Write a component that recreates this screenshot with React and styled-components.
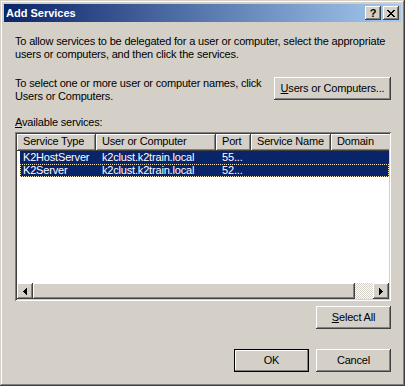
import React from "react";
import styled, { createGlobalStyle, css } from "styled-components";

const Global = createGlobalStyle`
  html, body { margin: 0; padding: 0; background: #d4d0c8; }
  body {
    width: 405px; height: 386px; overflow: hidden;
    font-family: "Liberation Sans", Arial, sans-serif;
    font-size: 11px; letter-spacing: -0.18px; color: #000;
  }
`;

const raised = css`
  box-shadow: inset -1px -1px #404040, inset 1px 1px #fff, inset -2px -2px #808080, inset 2px 2px #d4d0c8;
`;

const Window = styled.div`
  box-sizing: border-box;
  width: 405px;
  height: 386px;
  padding: 4px;
  background: #d4d0c8;
  box-shadow: inset -1px -1px #404040, inset 1px 1px #d4d0c8, inset -2px -2px #808080, inset 2px 2px #fff;
  display: flex;
  flex-direction: column;
`;

const TitleBar = styled.div`
  flex: 0 0 18px;
  display: flex;
  align-items: center;
  gap: 2px;
  padding: 0 2px;
  background: linear-gradient(to right, #0a246a, #a6caf0);
`;

const Title = styled.span`
  flex: 1;
  color: #fff;
  font-weight: bold;
  font-size: 11px;
  letter-spacing: 0;
  line-height: 18px;
  white-space: nowrap;
`;

const CaptionButton = styled.div`
  box-sizing: border-box;
  width: 16px;
  height: 14px;
  background: #d4d0c8;
  ${raised};
  display: flex;
  align-items: center;
  justify-content: center;
  font-weight: bold;
  font-size: 11px;
  letter-spacing: 0;
  line-height: 14px;
  svg { display: block; }
`;

const Body = styled.div`
  flex: 1;
  display: flex;
  flex-direction: column;
  padding: 13px 10px 10px 11px;
`;

const Para = styled.p`
  margin: 0;
  line-height: 13px;
  white-space: nowrap;
`;

const TopRow = styled.div`
  display: flex;
  justify-content: space-between;
  align-items: flex-start;
  margin-top: 16px;
`;

const Button = styled.button`
  box-sizing: border-box;
  width: ${(p) => p.$w || 75}px;
  height: 23px;
  margin: 0;
  padding: 0;
  border: none;
  background: #d4d0c8;
  font-family: "Liberation Sans", Arial, sans-serif;
  font-size: 11px;
  letter-spacing: -0.18px;
  color: #000;
  line-height: 13px;
  ${raised};
  ${(p) =>
    p.$default &&
    css`
      box-shadow: inset 0 0 0 1px #000, inset -2px -2px #808080, inset 2px 2px #fff;
    `}
`;

const Label = styled.div`
  margin-top: 13px;
  line-height: 13px;
  white-space: nowrap;
`;

const ListView = styled.div`
  box-sizing: border-box;
  margin-top: 3px;
  height: 169px;
  padding: 2px;
  background: #fff;
  box-shadow: inset 1px 1px #808080, inset -1px -1px #fff, inset 2px 2px #404040, inset -2px -2px #d4d0c8;
  display: flex;
  flex-direction: column;
`;

const Header = styled.div`
  flex: 0 0 17px;
  display: flex;
  overflow: hidden;
`;

const HeaderCell = styled.div`
  box-sizing: border-box;
  flex: 0 0 ${(p) => p.$w}px;
  height: 17px;
  padding: 1px 0 0 6px;
  background: #d4d0c8;
  line-height: 13px;
  white-space: nowrap;
  overflow: hidden;
  box-shadow: inset -1px -1px #404040, inset 1px 1px #fff, inset -2px -2px #808080;
`;

const Rows = styled.div`
  flex: 1;
  overflow: hidden;
  background: #fff;
`;

const Row = styled.div`
  box-sizing: border-box;
  display: flex;
  height: 13px;
  margin-left: 3px;
  background: #0a246a;
  color: #fff;
  line-height: 13px;
  ${(p) =>
    p.$focus &&
    css`
      outline: 1px dotted #f5e9c4;
      outline-offset: -1px;
    `}
`;

const Cell = styled.div`
  box-sizing: border-box;
  flex: ${(p) => (p.$w ? `0 0 ${p.$w}px` : "1")};
  padding-left: ${(p) => (p.$first ? 3 : 6)}px;
  white-space: nowrap;
  overflow: hidden;
`;

const ScrollBar = styled.div`
  flex: 0 0 16px;
  display: flex;
`;

const ScrollButton = styled.div`
  box-sizing: border-box;
  flex: 0 0 16px;
  height: 16px;
  background: #d4d0c8;
  ${raised};
  display: flex;
  align-items: center;
  justify-content: center;
  svg { display: block; }
`;

const Thumb = styled.div`
  box-sizing: border-box;
  flex: 0 0 322px;
  height: 16px;
  background: #d4d0c8;
  ${raised};
`;

const Track = styled.div`
  flex: 1;
  height: 16px;
  background-color: #d4d0c8;
  background-image: conic-gradient(#fff 25%, #d4d0c8 0 50%, #fff 0 75%, #d4d0c8 0);
  background-size: 2px 2px;
`;

const RightRow = styled.div`
  display: flex;
  justify-content: flex-end;
  gap: 7px;
  margin-top: ${(p) => p.$mt}px;
`;

const CloseIcon = () => (
  <svg width="8" height="7" viewBox="0 0 8 7" shapeRendering="crispEdges">
    <path
      fill="#000"
      d="M0 0h2v1H0z M6 0h2v1H6z M1 1h2v1H1z M5 1h2v1H5z M2 2h4v1H2z M3 3h2v1H3z M2 4h4v1H2z M1 5h2v1H1z M5 5h2v1H5z M0 6h2v1H0z M6 6h2v1H6z"
    />
  </svg>
);

const ArrowLeft = () => (
  <svg width="4" height="7" viewBox="0 0 4 7" shapeRendering="crispEdges">
    <path fill="#000" d="M3 0h1v7H3z M2 1h1v5H2z M1 2h1v3H1z M0 3h1v1H0z" />
  </svg>
);

const ArrowRight = () => (
  <svg width="4" height="7" viewBox="0 0 4 7" shapeRendering="crispEdges">
    <path fill="#000" d="M0 0h1v7H0z M1 1h1v5H1z M2 2h1v3H2z M3 3h1v1H3z" />
  </svg>
);

const columns = [
  { name: "Service Type", w: 79 },
  { name: "User or Computer", w: 120 },
  { name: "Port", w: 35 },
  { name: "Service Name", w: 80 },
  { name: "Domain", w: 80 },
];

const services = [
  { type: "K2HostServer", host: "k2clust.k2train.local", port: "55..." },
  { type: "K2Server", host: "k2clust.k2train.local", port: "52...", focus: true },
];

export default function App() {
  return (
    <>
      <Global />
      <Window>
        <TitleBar>
          <Title>Add Services</Title>
          <CaptionButton>?</CaptionButton>
          <CaptionButton>
            <CloseIcon />
          </CaptionButton>
        </TitleBar>
        <Body>
          <Para>
            To allow services to be delegated for a user or computer, select the appropriate
            <br />
            users or computers, and then click the services.
          </Para>
          <TopRow>
            <Para>
              To select one or more user or computer names, click
              <br />
              Users or Computers.
            </Para>
            <Button $w={117}>
              <u>U</u>sers or Computers...
            </Button>
          </TopRow>
          <Label>
            <u>A</u>vailable services:
          </Label>
          <ListView>
            <Header>
              {columns.map((c) => (
                <HeaderCell key={c.name} $w={c.w}>
                  {c.name}
                </HeaderCell>
              ))}
            </Header>
            <Rows>
              {services.map((s) => (
                <Row key={s.type} $focus={s.focus}>
                  <Cell $w={76} $first>
                    {s.type}
                  </Cell>
                  <Cell $w={120}>{s.host}</Cell>
                  <Cell $w={35}>{s.port}</Cell>
                  <Cell $w={80}></Cell>
                  <Cell></Cell>
                </Row>
              ))}
            </Rows>
            <ScrollBar>
              <ScrollButton>
                <ArrowLeft />
              </ScrollButton>
              <Thumb />
              <Track />
              <ScrollButton>
                <ArrowRight />
              </ScrollButton>
            </ScrollBar>
          </ListView>
          <RightRow $mt={5}>
            <Button>
              <u>S</u>elect All
            </Button>
          </RightRow>
          <RightRow $mt={20}>
            <Button $default>OK</Button>
            <Button>Cancel</Button>
          </RightRow>
        </Body>
      </Window>
    </>
  );
}
